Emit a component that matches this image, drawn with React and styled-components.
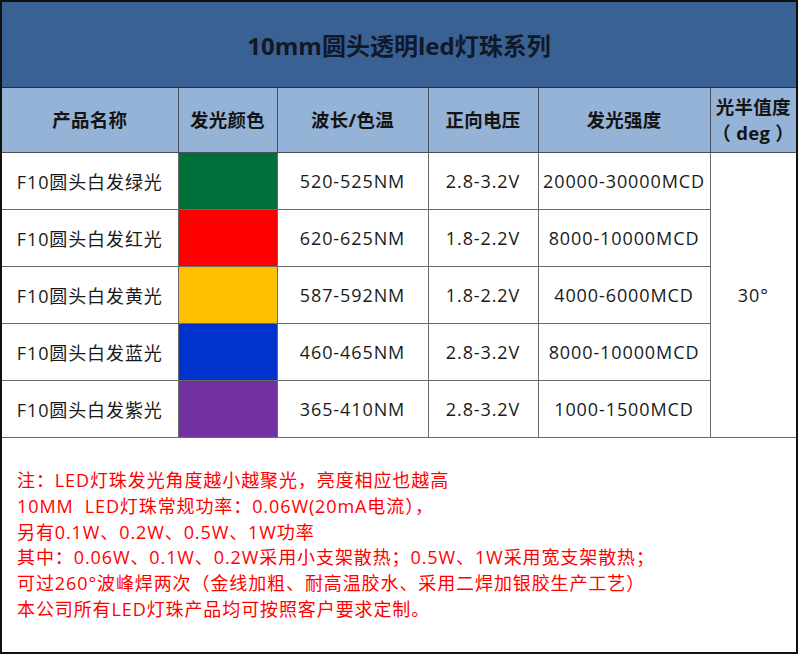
import styled, { createGlobalStyle } from "styled-components";

const GlobalStyle = createGlobalStyle`
  body {
    margin: 0;
    background: #fff;
    font-family: "Open Sans", "Noto Sans CJK SC", sans-serif;
  }
`;

const Frame = styled.div`
  width: 798px;
  height: 654px;
  box-sizing: border-box;
  border: 2px solid #111;
  display: flex;
  flex-direction: column;
  background: #fff;
`;

const Title = styled.div`
  height: 85px;
  background: #3a6193;
  border-bottom: 1px solid #2a2f3a;
  display: flex;
  align-items: center;
  justify-content: center;
  font-size: 24px;
  font-weight: 700;
  color: #111827;
`;

const Table = styled.table`
  width: 794px;
  border-collapse: collapse;
  table-layout: fixed;
`;

const Th = styled.th`
  height: 64px;
  padding: 0;
  background: #95b3d7;
  border: 1px solid #4a4f58;
  border-top: none;
  font-size: 18.5px;
  font-weight: 700;
  color: #141414;
  line-height: 26px;
  letter-spacing: 0.3px;
  &:first-child { border-left: none; }
  &:last-child { border-right: none; }
`;

const Td = styled.td`
  height: 56px;
  padding: 0;
  border: 1px solid #6a6a6a;
  text-align: center;
  font-size: 18px;
  letter-spacing: 0.9px;
  color: #1a1a1a;
  background: ${(p) => p.$swatch || "#fff"};
  &:first-child { border-left: none; }
  &:last-child { border-right: none; }
`;

const Notes = styled.div`
  flex: 1;
  padding: 30px 0 0 15px;
  color: #ff0000;
  font-size: 18px;
  letter-spacing: 0.9px;
  line-height: 25.8px;
  white-space: pre;
`;

const rows = [
  { name: "F10圆头白发绿光", color: "#00703a", wave: "520-525NM", volt: "2.8-3.2V", lum: "20000-30000MCD" },
  { name: "F10圆头白发红光", color: "#ff0000", wave: "620-625NM", volt: "1.8-2.2V", lum: "8000-10000MCD" },
  { name: "F10圆头白发黄光", color: "#ffc000", wave: "587-592NM", volt: "1.8-2.2V", lum: "4000-6000MCD" },
  { name: "F10圆头白发蓝光", color: "#0033cc", wave: "460-465NM", volt: "2.8-3.2V", lum: "8000-10000MCD" },
  { name: "F10圆头白发紫光", color: "#7030a0", wave: "365-410NM", volt: "2.8-3.2V", lum: "1000-1500MCD" },
];

const notes = [
  "注：LED灯珠发光角度越小越聚光，亮度相应也越高",
  "10MM  LED灯珠常规功率：0.06W(20mA电流），",
  "另有0.1W、0.2W、0.5W、1W功率",
  "其中：0.06W、0.1W、0.2W采用小支架散热；0.5W、1W采用宽支架散热；",
  "可过260°波峰焊两次（金线加粗、耐高温胶水、采用二焊加银胶生产工艺）",
  "本公司所有LED灯珠产品均可按照客户要求定制。",
];

export default function App() {
  return (
    <>
      <GlobalStyle />
      <Frame>
        <Title>10mm圆头透明led灯珠系列</Title>
        <Table>
          <colgroup>
            <col style={{ width: 176 }} />
            <col style={{ width: 99 }} />
            <col style={{ width: 151 }} />
            <col style={{ width: 110 }} />
            <col style={{ width: 172 }} />
            <col style={{ width: 86 }} />
          </colgroup>
          <thead>
            <tr>
              <Th>产品名称</Th>
              <Th>发光颜色</Th>
              <Th>波长/色温</Th>
              <Th>正向电压</Th>
              <Th>发光强度</Th>
              <Th>
                光半值度
                <br />（ deg ）
              </Th>
            </tr>
          </thead>
          <tbody>
            {rows.map((r, i) => (
              <tr key={r.name}>
                <Td>{r.name}</Td>
                <Td $swatch={r.color} />
                <Td>{r.wave}</Td>
                <Td>{r.volt}</Td>
                <Td>{r.lum}</Td>
                {i === 0 && <Td rowSpan={5}>30°</Td>}
              </tr>
            ))}
          </tbody>
        </Table>
        <Notes>{notes.join("\n")}</Notes>
      </Frame>
    </>
  );
}
